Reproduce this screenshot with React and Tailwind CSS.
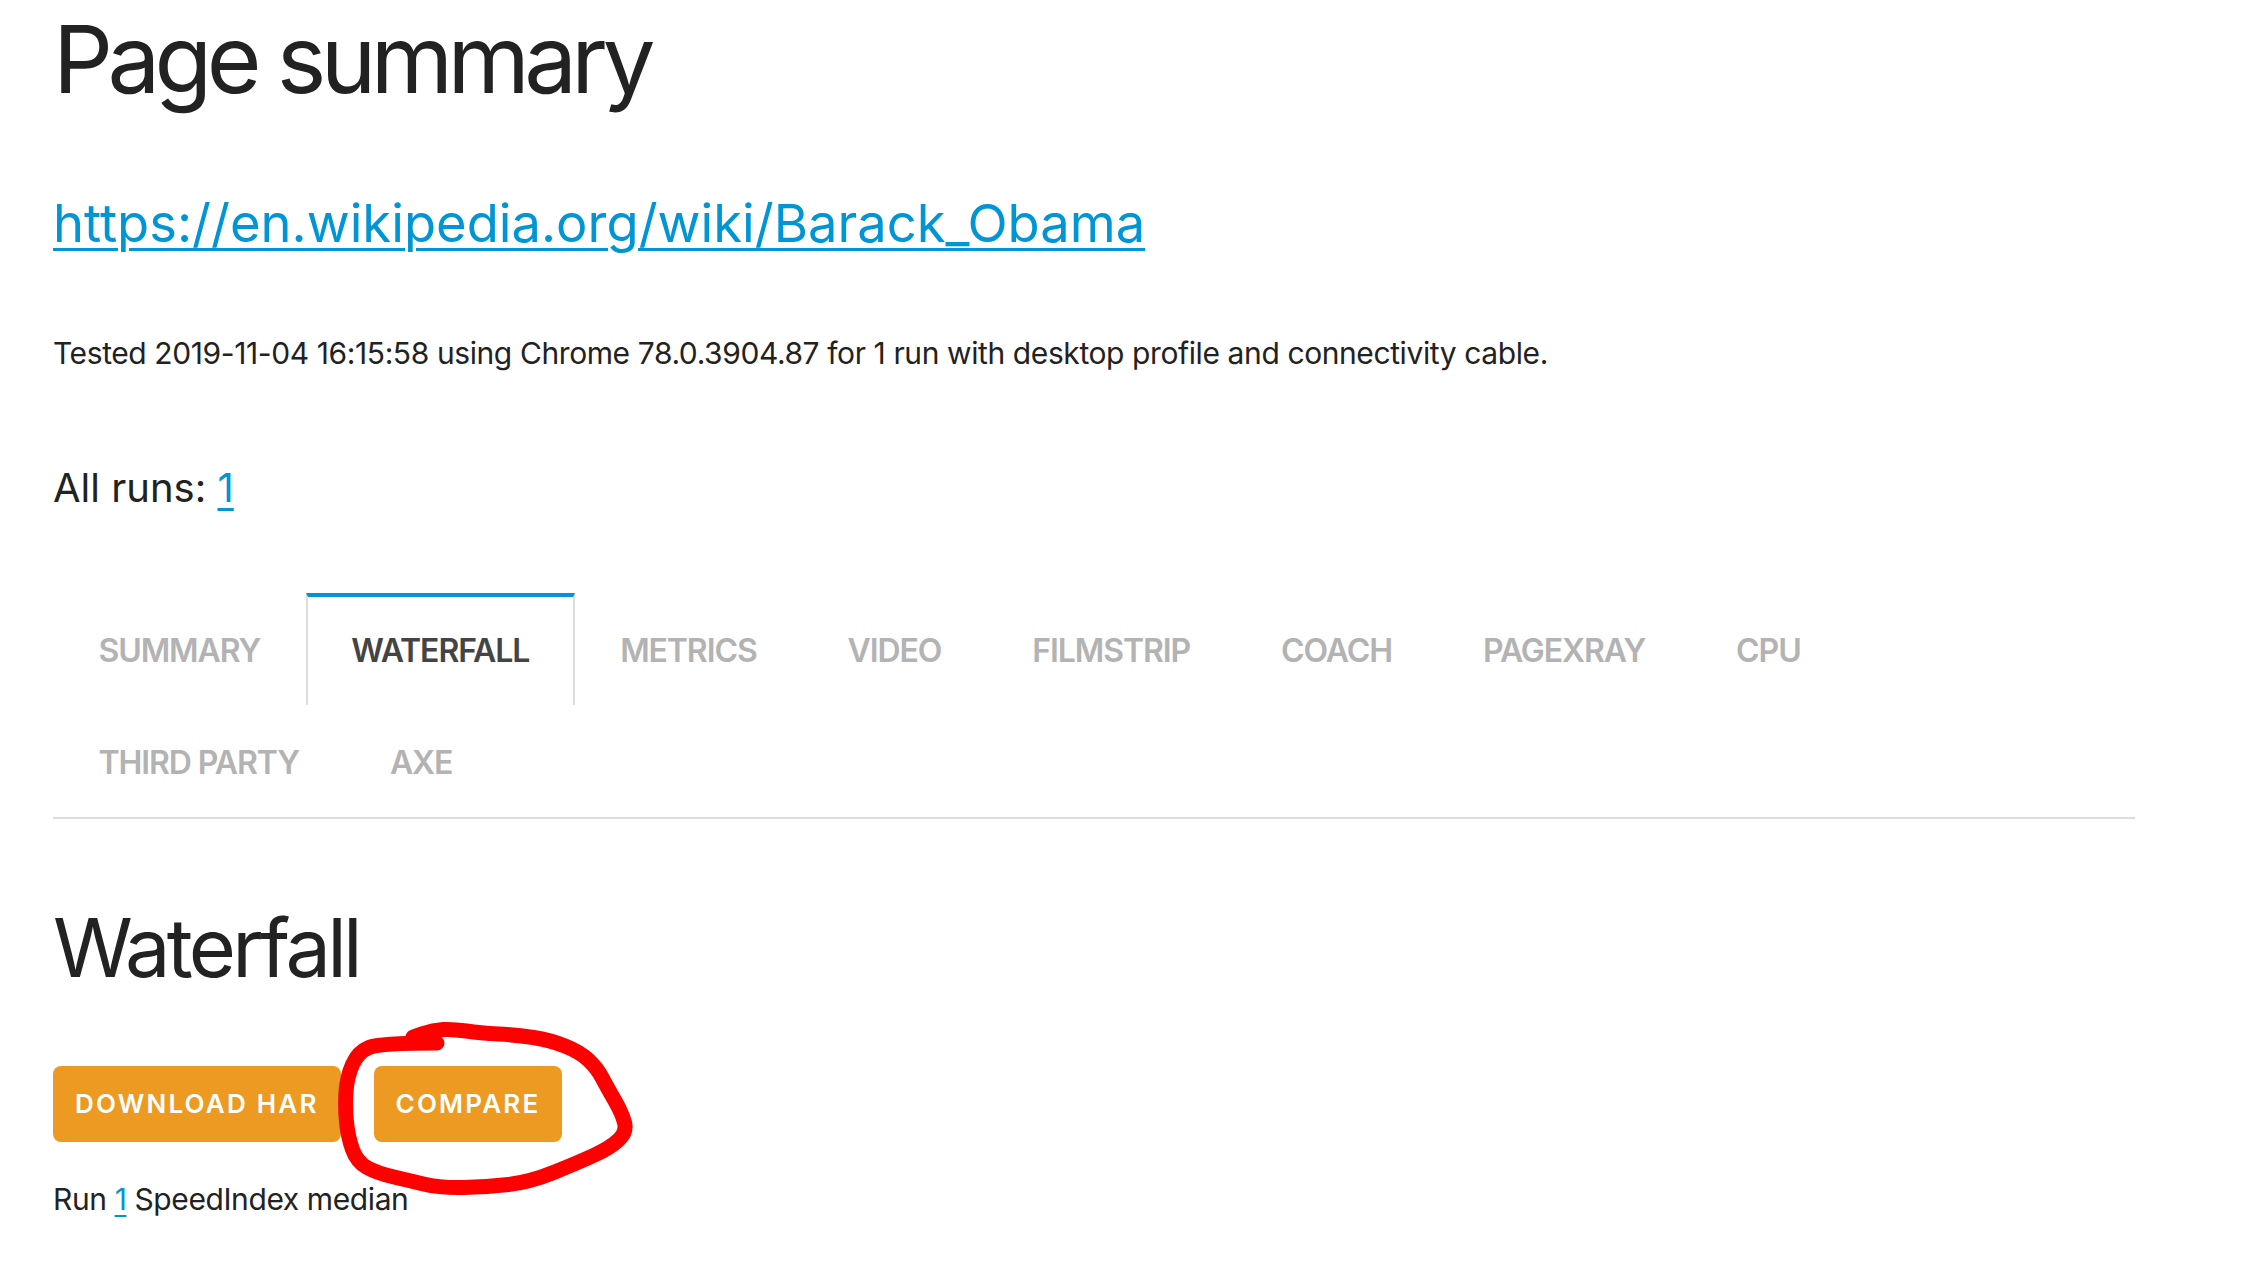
const tabsRow = [
  { label: "Summary" },
  { label: "Waterfall", active: true },
  { label: "Metrics" },
  { label: "Video" },
  { label: "Filmstrip" },
  { label: "Coach" },
  { label: "PageXray" },
  { label: "CPU" },
  { label: "Third party" },
  { label: "Axe" },
];

// hand drawn annotation around the compare button
const scribble = [
  [437, 1043], [380, 1043], [358, 1052], [347, 1077], [345, 1107], [348, 1137],
  [357, 1162], [377, 1173], [407, 1180], [440, 1188], [487, 1187], [530, 1182],
  [577, 1163], [610, 1148], [627, 1132], [622, 1113], [607, 1087], [597, 1068],
  [580, 1052], [550, 1040], [517, 1035], [480, 1033], [453, 1029], [433, 1030],
  [413, 1037],
];

function smoothPath(pts) {
  let d = `M ${pts[0][0]} ${pts[0][1]}`;
  for (let i = 1; i < pts.length - 1; i++) {
    const [x, y] = pts[i];
    const mx = (x + pts[i + 1][0]) / 2;
    const my = (y + pts[i + 1][1]) / 2;
    d += ` Q ${x} ${y} ${mx} ${my}`;
  }
  const last = pts[pts.length - 1];
  d += ` L ${last[0]} ${last[1]}`;
  return d;
}

function Tab({ label, active }) {
  return (
    <li
      className={
        "h-[112px] px-[43.5px] flex items-center border-t-4 border-x-2 uppercase text-[32px] leading-none font-semibold tracking-[-1.1px] " +
        (active
          ? "border-t-[#0095d5] border-x-[#dddddd] text-[#444444] bg-white"
          : "border-transparent text-[#b3b3b3]")
      }
    >
      {label}
    </li>
  );
}

export default function App() {
  return (
    <div className="relative w-[2250px] h-[1282px] bg-white overflow-hidden text-[#222222] font-['Inter','Liberation_Sans',sans-serif]">
      <div className="ml-[53px] w-[2082px] flex flex-col">
        <h1 className="mt-[12px] text-[94px] leading-none font-normal tracking-[-5.6px]">Page summary</h1>
        <p className="mt-[91px] text-[52.5px] leading-none">
          <a href="#" className="text-[#0095d5] underline decoration-[3px] underline-offset-[6px]">
            https://en.wikipedia.org/wiki/Barack_Obama
          </a>
        </p>
        <p className="mt-[88px] text-[30px] leading-none tracking-[-0.4px]">
          Tested 2019-11-04 16:15:58 using Chrome 78.0.3904.87 for 1 run with desktop profile and connectivity cable.
        </p>
        <p className="mt-[100px] text-[40px] leading-none">
          All runs:{" "}
          <a href="#" className="text-[#0095d5] underline decoration-[3px] underline-offset-[6px]">
            1
          </a>
        </p>

        <div className="mt-[85px] border-b-2 border-[#dddddd]">
          <ul className="w-[1900px] flex flex-wrap">
            {tabsRow.map((t) => (
              <Tab key={t.label} {...t} />
            ))}
          </ul>
        </div>

        <h2 className="mt-[89px] text-[81px] leading-none font-normal tracking-[-3.7px]">Waterfall</h2>
        <div className="mt-[77px] flex gap-[33px]">
          <button className="h-[76px] px-[22px] rounded-[8px] bg-[#ec9a22] text-white text-[26px] font-semibold uppercase tracking-[0.085em]">
            Download HAR
          </button>
          <button className="h-[76px] px-[22px] rounded-[8px] bg-[#ec9a22] text-white text-[26px] font-semibold uppercase tracking-[0.085em]">
            Compare
          </button>
        </div>
        <p className="mt-[42px] text-[30px] leading-none tracking-[-0.4px]">
          Run{" "}
          <a href="#" className="text-[#0095d5] underline decoration-2 underline-offset-[5px]">
            1
          </a>{" "}
          SpeedIndex median
        </p>
      </div>

      <svg
        className="absolute left-0 top-0 pointer-events-none"
        width="2250"
        height="1282"
        viewBox="0 0 2250 1282"
      >
        <path
          d={smoothPath(scribble)}
          fill="none"
          stroke="#ff0000"
          strokeWidth="15"
          strokeLinecap="round"
          strokeLinejoin="round"
        />
      </svg>
    </div>
  );
}
